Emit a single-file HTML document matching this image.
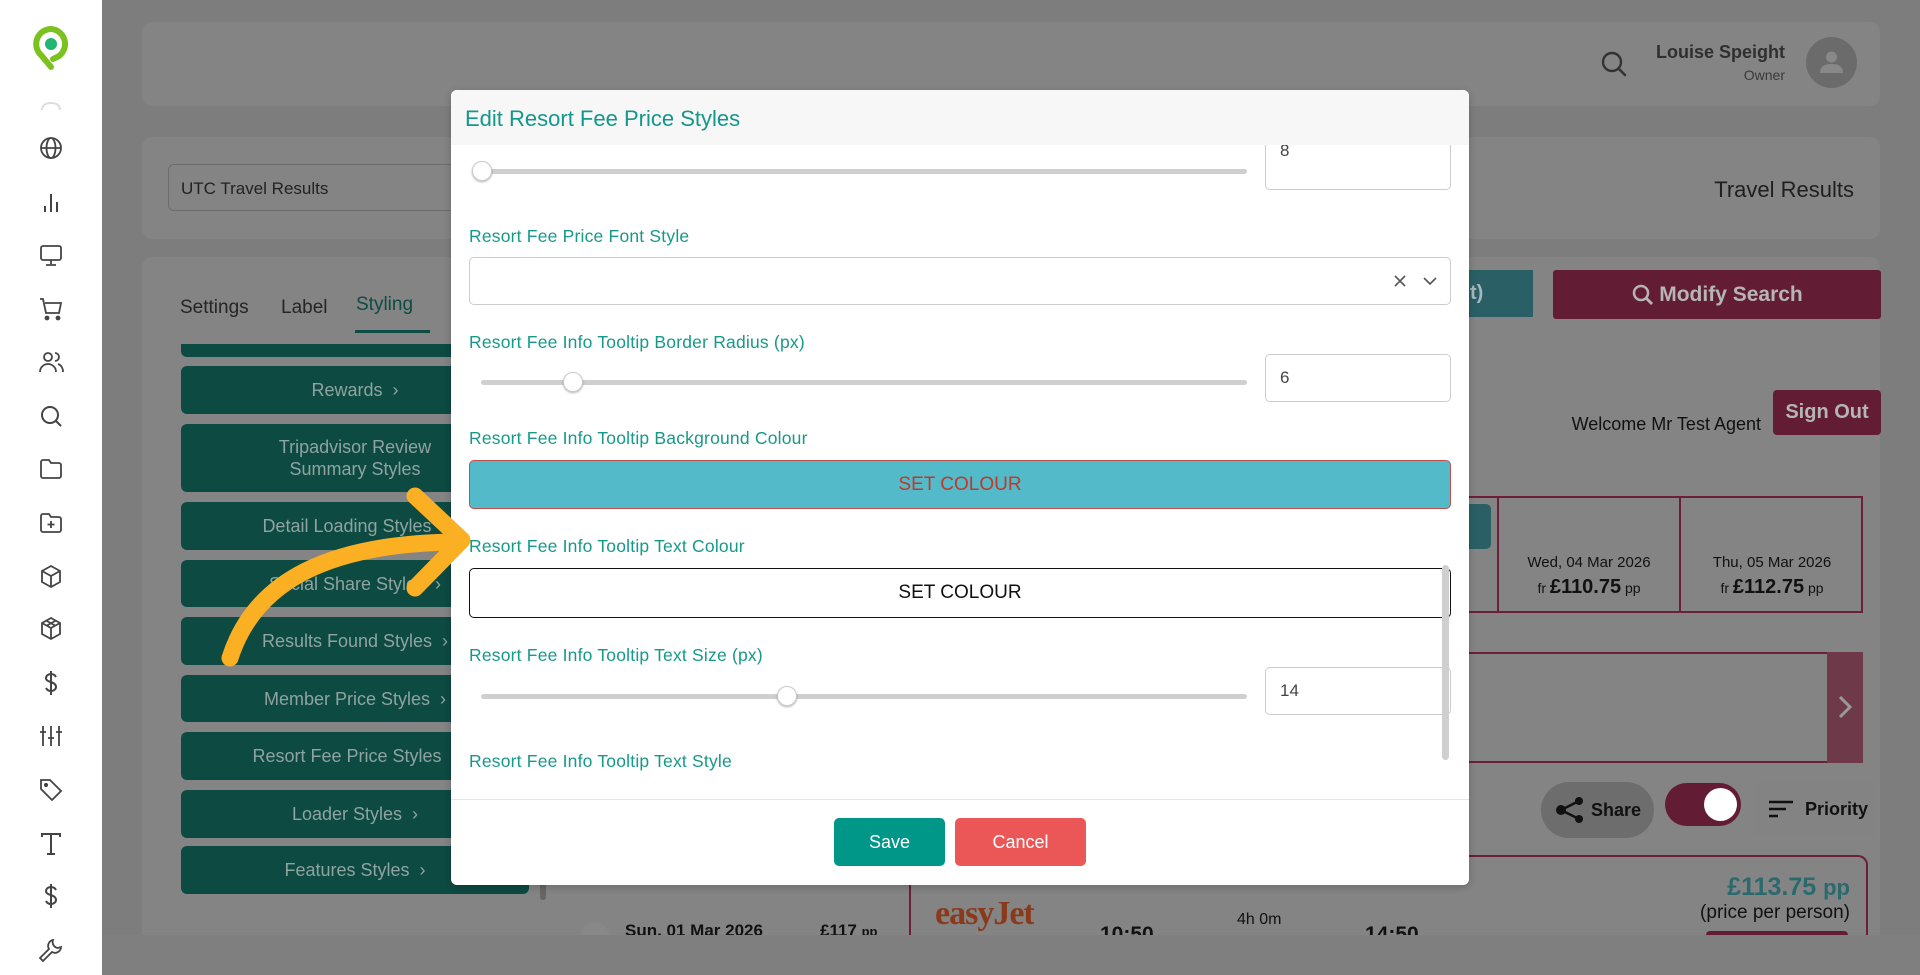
<!DOCTYPE html>
<html><head><meta charset="utf-8">
<style>
*{box-sizing:border-box;margin:0;padding:0}
body{width:1920px;height:975px;overflow:hidden;background:#7d7d7d;font-family:"Liberation Sans",sans-serif;position:relative}
.a{position:absolute}
.panel{position:absolute;background:#848484;border-radius:10px}
.side{position:absolute;left:0;top:0;width:102px;height:975px;background:#fff}
.ic{position:absolute;left:38px;width:26px;height:26px}
.gb{position:absolute;left:181px;width:348px;background:#0d4a42;border-radius:6px;color:#8fa3a0;font-size:18px;text-align:center;display:flex;align-items:center;justify-content:center;line-height:22px}
.lbl{position:absolute;left:469px;color:#17998a;font-size:17.5px;letter-spacing:.2px}
.track{position:absolute;left:481px;width:766px;height:5px;background:#cfcfcf;border-radius:3px}
.thumb{position:absolute;width:20px;height:20px;border-radius:50%;background:#fff;border:1px solid #ccc;box-shadow:0 1px 2px rgba(0,0,0,.3)}
.inp{position:absolute;left:1265px;width:186px;border:1px solid #ccc;border-radius:5px;background:#fff;font-size:17px;color:#444;padding-left:14px;display:flex;align-items:center}
</style></head><body>

<div class="panel" style="left:142px;top:22px;width:1738px;height:84px"></div>
<div class="panel" style="left:142px;top:137px;width:1738px;height:102px"></div>
<div class="panel" style="left:142px;top:257px;width:1738px;height:678px;border-radius:10px 10px 0 0"></div>

<svg class="a" style="left:1600px;top:50px" width="28" height="28" viewBox="0 0 28 28"><circle cx="12" cy="12" r="9" fill="none" stroke="#333" stroke-width="2.4"/><path d="M19 19l6 6" stroke="#333" stroke-width="2.6" stroke-linecap="round"/></svg>
<div class="a" style="left:1620px;top:42px;width:165px;text-align:right;font-size:18px;font-weight:bold;color:#2f2f2f">Louise Speight</div>
<div class="a" style="left:1620px;top:67px;width:165px;text-align:right;font-size:14px;color:#3a3a3a">Owner</div>
<div class="a" style="left:1806px;top:37px;width:51px;height:51px;border-radius:50%;background:#6b6b6b"></div>
<svg class="a" style="left:1818px;top:50px" width="27" height="25" viewBox="0 0 27 25"><circle cx="13.5" cy="7" r="5.5" fill="#888"/><path d="M2 23c0-7 5-9 11.5-9S25 16 25 23z" fill="#888"/></svg>

<div class="a" style="left:168px;top:164px;width:300px;height:47px;border:1px solid #6d6d6d;border-radius:6px;font-size:17px;color:#222;padding:14px 12px">UTC Travel Results</div>
<div class="a" style="left:1640px;top:177px;width:214px;text-align:right;font-size:22px;color:#1f1f1f">Travel Results</div>

<div class="a" style="left:180px;top:297px;font-size:19px;color:#252525">Settings</div>
<div class="a" style="left:281px;top:297px;font-size:19px;color:#252525">Label</div>
<div class="a" style="left:356px;top:294px;font-size:19px;color:#0e4b45">Styling</div>
<div class="a" style="left:355px;top:330px;width:75px;height:3px;background:#0e4b45"></div>

<div class="gb" style="top:344px;height:13px;border-radius:0 0 6px 6px"></div>
<div class="gb" style="top:366px;height:48px">Rewards&nbsp;&nbsp;›</div>
<div class="gb" style="top:424px;height:68px">Tripadvisor Review<br>Summary Styles</div>
<div class="gb" style="top:502px;height:48px">Detail Loading Styles&nbsp;&nbsp;›</div>
<div class="gb" style="top:560px;height:47px">Social Share Styles&nbsp;&nbsp;›</div>
<div class="gb" style="top:617px;height:48px">Results Found Styles&nbsp;&nbsp;›</div>
<div class="gb" style="top:675px;height:47px">Member Price Styles&nbsp;&nbsp;›</div>
<div class="gb" style="top:732px;height:48px">Resort Fee Price Styles&nbsp;&nbsp;›</div>
<div class="gb" style="top:790px;height:48px">Loader Styles&nbsp;&nbsp;›</div>
<div class="gb" style="top:846px;height:48px">Features Styles&nbsp;&nbsp;›</div>
<div class="a" style="left:540px;top:880px;width:6px;height:20px;background:#666;border-radius:3px"></div>

<div class="a" style="left:1420px;top:270px;width:113px;height:47px;background:#2a5f66;color:#a8b8ba;font-size:20px;font-weight:bold;padding:12px 0 0 50px">t)</div>
<div class="a" style="left:1553px;top:270px;width:328px;height:49px;background:#621d34;border-radius:3px;color:#b5b5b5;font-size:21px;font-weight:bold;display:flex;align-items:center;justify-content:center">
<svg width="24" height="24" viewBox="0 0 24 24" style="margin-right:4px"><circle cx="10" cy="10" r="7" fill="none" stroke="#b5b5b5" stroke-width="2.5"/><path d="M15 15l6 6" stroke="#b5b5b5" stroke-width="2.8"/></svg>Modify Search</div>
<div class="a" style="left:1560px;top:414px;width:201px;text-align:right;font-size:18px;color:#111">Welcome Mr Test Agent</div>
<div class="a" style="left:1773px;top:390px;width:108px;height:45px;background:#621d34;border-radius:4px;color:#b5b5b5;font-size:20px;font-weight:bold;display:flex;align-items:center;justify-content:center">Sign Out</div>

<div class="a" style="left:1400px;top:496px;width:463px;height:117px;border:2px solid #6b1f38;border-left:none"></div>
<div class="a" style="left:1440px;top:504px;width:51px;height:45px;background:#2a5f66;border-radius:0 5px 5px 0"></div>
<div class="a" style="left:1497px;top:496px;width:2px;height:117px;background:#6b1f38"></div>
<div class="a" style="left:1679px;top:496px;width:2px;height:117px;background:#6b1f38"></div>
<div class="a" style="left:1499px;top:554px;width:180px;text-align:center;font-size:15px;color:#111">Wed, 04 Mar 2026</div>
<div class="a" style="left:1499px;top:576px;width:180px;text-align:center;font-size:14px;color:#111">fr <b style="font-size:20px">£110.75</b> pp</div>
<div class="a" style="left:1681px;top:554px;width:182px;text-align:center;font-size:15px;color:#111">Thu, 05 Mar 2026</div>
<div class="a" style="left:1681px;top:576px;width:182px;text-align:center;font-size:14px;color:#111">fr <b style="font-size:20px">£112.75</b> pp</div>

<div class="a" style="left:1400px;top:652px;width:463px;height:111px;border-top:2px solid #6b1f38;border-bottom:2px solid #6b1f38"></div>
<div class="a" style="left:1827px;top:652px;width:36px;height:111px;background:#6e3a4a"></div>
<svg class="a" style="left:1837px;top:694px" width="16" height="26" viewBox="0 0 16 26"><path d="M3 3l10 10L3 23" fill="none" stroke="#999" stroke-width="3"/></svg>

<div class="a" style="left:1541px;top:782px;width:113px;height:56px;border-radius:28px;background:#6d6d6d;font-size:18px;font-weight:bold;color:#111;display:flex;align-items:center;padding-left:14px">
<svg width="30" height="30" viewBox="0 0 30 30" style="margin-right:6px"><circle cx="6" cy="15" r="5" fill="#111"/><circle cx="24" cy="6" r="4" fill="#111"/><circle cx="24" cy="24" r="4" fill="#111"/><path d="M6 15L24 6M6 15L24 24" stroke="#111" stroke-width="2.5"/></svg>Share</div>
<div class="a" style="left:1665px;top:783px;width:76px;height:43px;border-radius:22px;background:#621d34"></div>
<div class="a" style="left:1704px;top:788px;width:33px;height:33px;border-radius:50%;background:#fff"></div>
<div class="a" style="left:1753px;top:782px;width:123px;height:54px;background:#838383;border-radius:5px;font-size:18px;font-weight:bold;color:#111;display:flex;align-items:center;padding-left:16px">
<svg width="26" height="18" viewBox="0 0 26 18" style="margin-right:10px"><path d="M0 2h24M0 9h17M0 16h9" stroke="#111" stroke-width="2.5"/></svg>Priority</div>

<div class="a" style="left:909px;top:855px;width:959px;height:80px;border:2px solid #6b1f38;border-bottom:none;border-radius:10px 10px 0 0"></div>
<div class="a" style="left:1620px;top:873px;width:230px;text-align:right;font-size:25px;font-weight:bold;color:#2a6a6f">£113.75 <span style="font-size:22px">pp</span></div>
<div class="a" style="left:1600px;top:902px;width:250px;text-align:right;font-size:19px;color:#111">(price per person)</div>
<div class="a" style="left:1706px;top:931px;width:142px;height:4px;background:#621d34;border-radius:4px 4px 0 0"></div>
<div class="a" style="left:935px;top:895px;font-family:'Liberation Serif',serif;font-size:34px;font-weight:bold;color:#8a3a1a;letter-spacing:-1px;height:40px;overflow:hidden">easyJet</div>
<div class="a" style="left:566px;top:885px;width:342px;height:50px;overflow:hidden">
<div class="a" style="left:15px;top:37px;width:28px;height:28px;border-radius:50%;background:#888"></div>
<div class="a" style="left:59px;top:36px;font-size:17px;font-weight:bold;color:#111">Sun, 01 Mar 2026</div>
<div class="a" style="left:254px;top:36px;font-size:17px;font-weight:bold;color:#111">£117 <span style="font-size:13px">pp</span></div>
</div>
<div class="a" style="left:1090px;top:895px;width:400px;height:40px;overflow:hidden">
<div class="a" style="left:10px;top:28px;font-size:21px;font-weight:bold;color:#111">10:50</div>
<div class="a" style="left:147px;top:16px;font-size:16px;color:#111">4h 0m</div>
<div class="a" style="left:275px;top:28px;font-size:21px;font-weight:bold;color:#111">14:50</div>
</div>
<div class="a" style="left:102px;top:935px;width:1818px;height:40px;background:#7f7f7f"></div>

<div class="a" style="left:451px;top:90px;width:1018px;height:795px;background:#fff;border-radius:6px;overflow:hidden;box-shadow:0 2px 8px rgba(0,0,0,.2)">
  <div class="a" style="left:0;top:0;width:1018px;height:55px;background:#f7f7f7"></div>
  <div class="a" style="left:14px;top:16px;font-size:22px;color:#13978a">Edit Resort Fee Price Styles</div>
</div>
<div class="a" style="left:451px;top:145px;width:1018px;height:655px;overflow:hidden">
  <div class="a" style="left:814px;top:-5px;width:186px;height:50px;border:1px solid #ccc;border-radius:5px;background:#fff;font-size:17px;color:#444;padding:0 14px;line-height:20px">8</div>
</div>
<div class="track" style="top:169px"></div>
<div class="thumb" style="left:472px;top:161px"></div>

<div class="lbl" style="top:226px">Resort Fee Price Font Style</div>
<div class="a" style="left:469px;top:257px;width:982px;height:48px;border:1px solid #ccc;border-radius:5px;background:#fff"></div>
<svg class="a" style="left:1393px;top:274px" width="14" height="14" viewBox="0 0 14 14"><path d="M2 2l10 10M12 2L2 12" stroke="#555" stroke-width="1.6"/></svg>
<svg class="a" style="left:1422px;top:275px" width="16" height="12" viewBox="0 0 16 12"><path d="M2 3l6 6 6-6" fill="none" stroke="#555" stroke-width="1.6"/></svg>

<div class="lbl" style="top:332px">Resort Fee Info Tooltip Border Radius (px)</div>
<div class="track" style="top:380px"></div>
<div class="thumb" style="left:563px;top:372px"></div>
<div class="inp" style="top:354px;height:48px">6</div>

<div class="lbl" style="top:428px">Resort Fee Info Tooltip Background Colour</div>
<div class="a" style="left:469px;top:460px;width:982px;height:49px;background:#52bac8;border:1.5px solid #c0504d;border-radius:5px;color:#c0392b;font-size:19px;display:flex;align-items:center;justify-content:center">SET COLOUR</div>

<div class="lbl" style="top:536px">Resort Fee Info Tooltip Text Colour</div>
<div class="a" style="left:469px;top:568px;width:982px;height:50px;background:#fff;border:1.5px solid #111;border-radius:5px;color:#111;font-size:19px;display:flex;align-items:center;justify-content:center">SET COLOUR</div>

<div class="lbl" style="top:645px">Resort Fee Info Tooltip Text Size (px)</div>
<div class="track" style="top:694px"></div>
<div class="thumb" style="left:777px;top:686px"></div>
<div class="inp" style="top:667px;height:48px">14</div>

<div class="lbl" style="top:751px">Resort Fee Info Tooltip Text Style</div>
<div class="a" style="left:1442px;top:565px;width:7px;height:195px;background:#cfcfcf;border-radius:4px"></div>

<div class="a" style="left:451px;top:799px;width:1018px;height:1px;background:#e6e6e6"></div>
<div class="a" style="left:834px;top:818px;width:111px;height:48px;background:#009688;border-radius:5px;color:#fff;font-size:18px;display:flex;align-items:center;justify-content:center">Save</div>
<div class="a" style="left:955px;top:818px;width:131px;height:48px;background:#eb5757;border-radius:5px;color:#fff;font-size:18px;display:flex;align-items:center;justify-content:center">Cancel</div>

<svg class="a" style="left:0;top:0" width="1920" height="975" viewBox="0 0 1920 975">
<path d="M230 658 C255 580 330 543 458 542" fill="none" stroke="#fbb024" stroke-width="17" stroke-linecap="round"/>
<path d="M415 496 L462 540 L415 588" fill="none" stroke="#fbb024" stroke-width="17" stroke-linecap="round" stroke-linejoin="round"/>
</svg>

<div class="side">
<svg class="a" style="left:33px;top:26px" width="36" height="44" viewBox="0 0 36 44"><path d="M18 3a15 15 0 0 0-10 26l10 12" fill="none" stroke="#7cc21e" stroke-width="6" stroke-linecap="round"/><path d="M18 3a15 15 0 0 1 8 27l-6 3" fill="none" stroke="#7cc21e" stroke-width="6" stroke-linecap="round"/><circle cx="18" cy="18" r="6" fill="#22b573"/></svg>
<svg class="ic" style="top:88px" viewBox="0 0 26 26"><path d="M4 22c0-5 4-7 9-7s9 2 9 7" fill="none" stroke="#ddd" stroke-width="2"/></svg>
<svg class="ic" style="top:135px" viewBox="0 0 26 26" fill="none" stroke="#444" stroke-width="1.8"><circle cx="13" cy="13" r="10"/><ellipse cx="13" cy="13" rx="4.5" ry="10"/><path d="M3 13h20"/></svg>
<svg class="ic" style="top:189px" viewBox="0 0 26 26" stroke="#444" stroke-width="2"><path d="M7 23v-6M13 23V5M19 23v-10"/></svg>
<svg class="ic" style="top:242px" viewBox="0 0 26 26" fill="none" stroke="#444" stroke-width="1.8"><rect x="3" y="4" width="20" height="14" rx="2"/><path d="M13 18v4M8 23h10"/></svg>
<svg class="ic" style="top:296px" viewBox="0 0 26 26" fill="none" stroke="#444" stroke-width="1.8"><path d="M2 3h3l3 14h13l2-10H7"/><circle cx="9" cy="22" r="1.5" fill="#444"/><circle cx="20" cy="22" r="1.5" fill="#444"/></svg>
<svg class="ic" style="top:349px" viewBox="0 0 26 26" fill="none" stroke="#444" stroke-width="1.8"><circle cx="10" cy="8" r="4"/><path d="M2 23c0-5 4-8 8-8s8 3 8 8M17 4a4 4 0 0 1 0 8M20 15c3 1 5 4 5 8"/></svg>
<svg class="ic" style="top:403px" viewBox="0 0 26 26" fill="none" stroke="#444" stroke-width="2"><circle cx="12" cy="12" r="8"/><path d="M18 18l5 5"/></svg>
<svg class="ic" style="top:456px" viewBox="0 0 26 26" fill="none" stroke="#444" stroke-width="1.8"><path d="M3 6a2 2 0 0 1 2-2h6l2 3h8a2 2 0 0 1 2 2v11a2 2 0 0 1-2 2H5a2 2 0 0 1-2-2z"/></svg>
<svg class="ic" style="top:510px" viewBox="0 0 26 26" fill="none" stroke="#444" stroke-width="1.8"><path d="M3 6a2 2 0 0 1 2-2h6l2 3h8a2 2 0 0 1 2 2v11a2 2 0 0 1-2 2H5a2 2 0 0 1-2-2z"/><path d="M13 11v7M9.5 14.5h7"/></svg>
<svg class="ic" style="top:564px" viewBox="0 0 26 26" fill="none" stroke="#444" stroke-width="1.8"><path d="M13 2l9 5v11l-9 5-9-5V7z"/><path d="M4 7l9 5 9-5M13 12v11"/></svg>
<svg class="ic" style="top:616px" viewBox="0 0 26 26" fill="none" stroke="#444" stroke-width="1.8"><path d="M13 2l9 5v11l-9 5-9-5V7z"/><path d="M4 7l9 5 9-5M13 12v11M8 4.5l9 5M18 4.5l-9 5"/></svg>
<svg class="ic" style="top:670px" viewBox="0 0 26 26" fill="none" stroke="#444" stroke-width="2"><path d="M18 7c-1-2-3-3-5-3-3 0-5 2-5 4 0 5 10 3 10 9 0 2-2 4-5 4-2 0-4-1-5-3M13 1v24"/></svg>
<svg class="ic" style="top:723px" viewBox="0 0 26 26" fill="none" stroke="#444" stroke-width="1.8"><path d="M5 3v20M13 3v20M21 3v20M2 9h6M10 15h6M18 9h6"/></svg>
<svg class="ic" style="top:777px" viewBox="0 0 26 26" fill="none" stroke="#444" stroke-width="1.8"><path d="M3 3h9l11 11-9 9L3 12z"/><circle cx="8" cy="8" r="1.2" fill="#444"/></svg>
<svg class="ic" style="top:831px" viewBox="0 0 26 26" fill="none" stroke="#444" stroke-width="2"><path d="M4 6V3h18v3M13 3v20M9 23h8"/></svg>
<svg class="ic" style="top:883px" viewBox="0 0 26 26" fill="none" stroke="#444" stroke-width="2"><path d="M18 7c-1-2-3-3-5-3-3 0-5 2-5 4 0 5 10 3 10 9 0 2-2 4-5 4-2 0-4-1-5-3M13 1v24"/></svg>
<svg class="ic" style="top:937px" viewBox="0 0 26 26" fill="none" stroke="#444" stroke-width="1.8"><path d="M15 3a6 6 0 0 0 5 8l3-1a6 6 0 0 1-9 5L5 24l-3-3 9-9a6 6 0 0 1 4-9z"/></svg>
</div>
</body></html>
